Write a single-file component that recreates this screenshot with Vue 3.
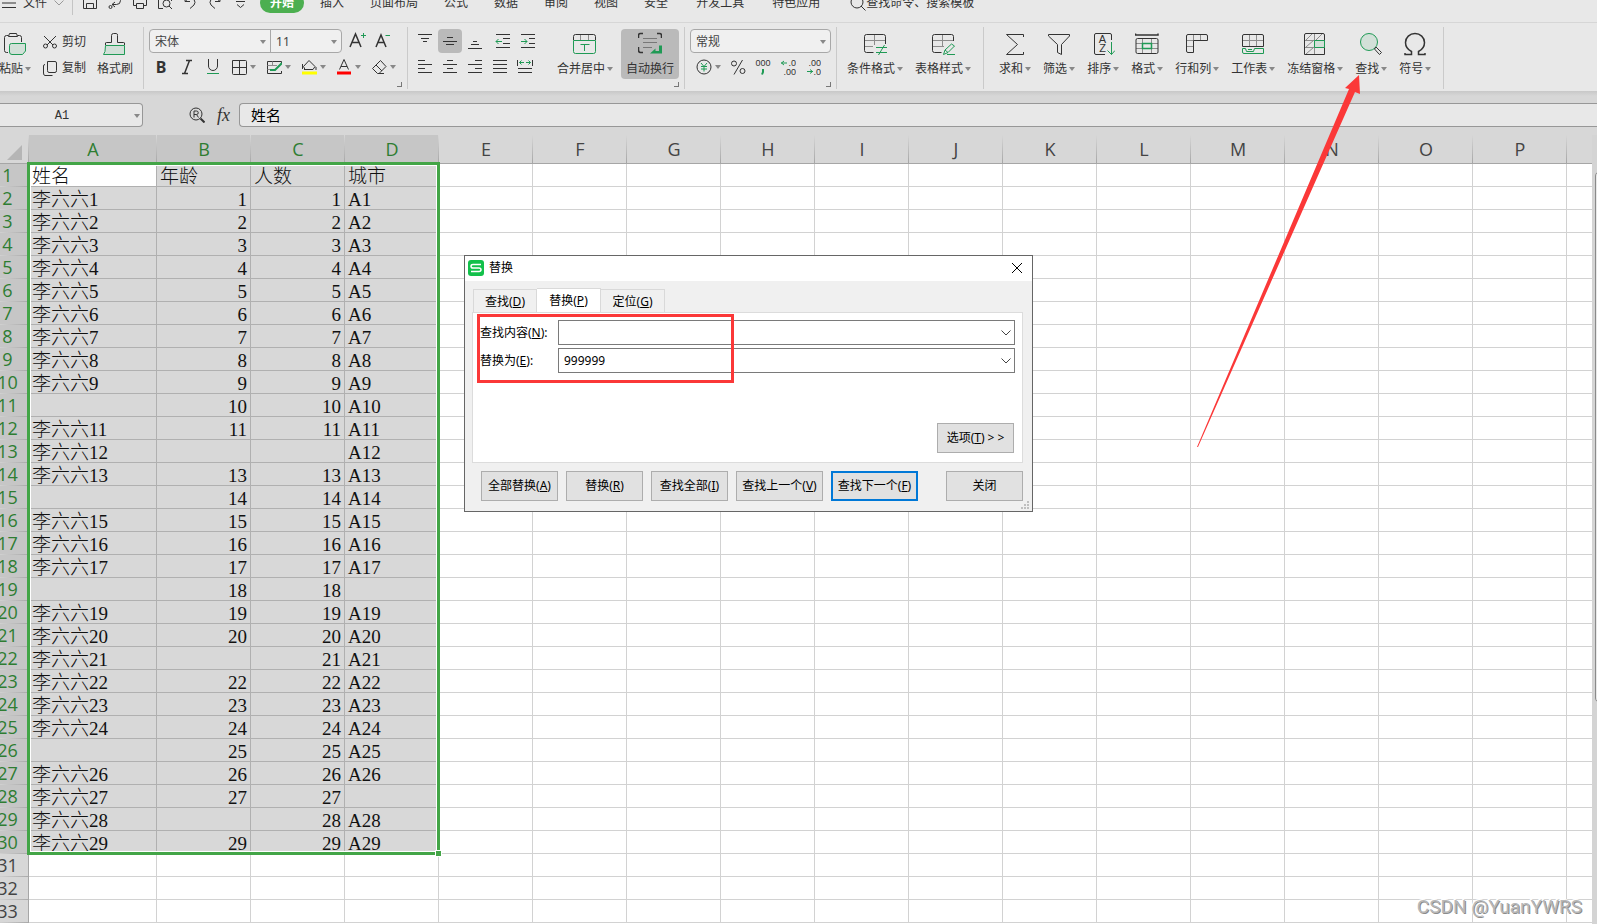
<script setup>
import { ref, computed, onMounted, onUnmounted } from 'vue'

const G = 'stroke="#1f9a55"'
const Y = 'stroke="#8c8c8c"'
const F = 'fill="#d2e0d8"'

const icons = {
  save: '<path d="M1.5 2V13.5H14.5V2M4.5 13.5V8.5H11.5V13.5"/>',
  output: '<path d="M7 1.5H9.5A4 4 0 0 1 9.5 9.5H5M8 7L5 9.5L8 12"/><circle cx="3.5" cy="12" r="1.5"/>',
  print: '<path d="M4 10.5H1.5V3.5H14.5V10.5H12"/><path d="M4.5 8.5H11.5V13.5H4.5Z"/>',
  preview: '<path d="M6 13.5H1.5V2M14.5 6V2"/><circle cx="9.5" cy="8.5" r="3.5"/><path d="M12 11L15 14"/>',
  undo: '<path d="M3 1.5V6.5H8M3.5 6L7 3A4.5 4.5 0 0 1 12 10L8 13.5"/>',
  redo: '<path d="M13 1.5V6.5H8M12.5 6L9 3A4.5 4.5 0 0 0 4 10L8 13.5"/>',
  more: '<path d="M4 6.5H13"/><path d="M5 9.5L8.5 12.5L12 9.5"/>',
  cut: '<path d="M2 2L11 11M14 2L5 11"/><circle cx="3.5" cy="12" r="2"/><circle cx="12.5" cy="12" r="2"/>',
  copy: '<path d="M5.5 1.5H13Q14.5 1.5 14.5 3V10.5Q14.5 12.5 13 12.5H7Q5.5 12.5 5.5 10.5Z"/><path d="M3 4.5Q1.5 4.5 1.5 6V13Q1.5 15.5 3 15.5H10.5"/>',
  italic: '<path stroke-width="1.5" d="M7 1.5H13M3 14.5H9M10.5 1.5L5.5 14.5"/>',
  underline: `<path d="M3.5 0V7A4.5 4.5 0 0 0 12.5 7V0"/><path ${G} d="M2 14.5H14"/>`,
  border: '<path d="M1.5 1.5H14.5Q15.5 1.5 15.5 2.5V14.5Q15.5 15.5 14.5 15.5H2.5Q1.5 15.5 1.5 14.5ZM8.5 1.5V15.5M1.5 8.5H15.5"/>',
  cellstyle: `<path d="M15.5 4V2.5H1.5V14.5H15.5V12"/><path ${Y} d="M1.5 6.5H11M1.5 10.5H6M6.5 2.5V6.5"/><path ${G} stroke-width="2" d="M4 11H9L16 4"/>`,
  fill: '<path d="M3 10.5H12L14 7.5L8 1.5L2.5 7.5L4 10.5M1.5 5V10M15 8V11"/><path stroke="#ffff00" stroke-width="3" d="M1 14H16"/>',
  fontcolor: '<path d="M3.5 10.5L8 .5L12.5 10.5M5 7.5H11"/><path stroke="#ff0000" stroke-width="3" d="M1 14H15"/>',
  eraser: '<path d="M1.5 9.5L9.5 1.5L15 7.5L8 14.5H6.5ZM5 6L11 12M7 14.5H13"/>',
  top: '<path d="M1 1.5H15M4 5.5H12M6 8.5H10"/>',
  middle: '<path d="M5 4.5H11M1 8.5H15M4 11.5H12"/>',
  bottom: '<path d="M6 8.5H10M4 11.5H12M1 15.5H15"/>',
  outdent: `<path d="M1 1.5H15M8 5.5H15M8 10.5H15M1 14.5H15"/><path ${G} d="M1 8.5H7M3.5 6L1 8.5L3.5 11"/>`,
  indent: `<path d="M1 1.5H15M9 5.5H15M9 10.5H15M1 14.5H15"/><path ${G} d="M1 8.5H7M4.5 6L7 8.5L4.5 11"/>`,
  left: '<path d="M1 1.5H8M1 5.5H15M1 9.5H8M1 13.5H15"/>',
  center: '<path d="M5 1.5H11M1 5.5H15M5 9.5H11M1 13.5H15"/>',
  right: '<path d="M8 1.5H15M1 5.5H15M8 9.5H15M1 13.5H15"/>',
  justify: '<path d="M1 1.5H15M1 5.5H15M1 9.5H15M1 13.5H15"/>',
  distribute: `<path d="M.5 1V7M15.5 1V7M1 9.5H15M1 13.5H15"/><path ${G} d="M2.5 3.5H7M4.5 1.5L2.5 3.5L4.5 5.5M9 3.5H13.5M11.5 1.5L13.5 3.5L11.5 5.5"/>`,
  yen: `<circle cx="8" cy="8" r="7"/><path ${G} d="M5 4L8 7.5L11 4M8 7.5V12.5M5 7.5H11M5 10H11"/>`,
  percent: '<circle cx="4" cy="4.5" r="2.5"/><circle cx="12.5" cy="12" r="2.5"/><path d="M12.5 1L4 15.5"/>',
  zeros: `<text x="8" y="7" text-anchor="middle">000</text><path ${G} stroke-width="2" d="M8 10V13L7 15.5"/>`,
  decmore: `<text x="16" y="7" text-anchor="end">.0</text><text x="16" y="16" text-anchor="end">.00</text><path ${G} d="M1 4H7M4 2L1.5 4L4 6"/>`,
  decless: `<text x="16" y="7" text-anchor="end">.00</text><text x="16" y="16" text-anchor="end">.0</text><path ${G} d="M2 12.5H8M5 10.5L7.5 12.5L5 14.5"/>`,
  bigger: `<path stroke-width="1.5" d="M1 15L6.5 2L12 15M3 10.5H10"/><path ${G} d="M12 3.5H17M14.5 1V6"/>`,
  smaller: `<path stroke-width="1.5" d="M2 15L7 3L12 15M4 10.5H10"/><path ${G} d="M11.5 3.5H16"/>`,
  paste: `<path d="M5.5 3.5H3.5Q1.5 3.5 1.5 5.5V18.5Q1.5 20.5 3.5 20.5H5M14.5 3.5H16.5Q18.5 3.5 18.5 5.5V10M6.5 1.5H13.5L14.5 4.5H5.5Z"/><path ${G} ${F} d="M8.5 11.5H22.5V19L19.5 22.5H9Q6.5 22.5 6.5 20V13.5Q6.5 11.5 8.5 11.5Z"/>`,
  brush: `<path ${F} stroke="none" d="M2.5 13H21.5V22.5H2.5Z"/><path d="M2.5 13V11Q2.5 10.5 3.5 10.5H8.5V3.5Q8.5 1.5 10.5 1.5H13.5Q14.5 1.5 14.5 3.5V10.5H20.5Q21.5 10.5 21.5 11V13"/><path ${G} d="M2.5 13.5H21.5V22.5H.5Q2.5 21 2.5 13.5"/>`,
  merge: `<path d="M.5 8V4.5Q.5 2.5 2.5 2.5H20.5Q22.5 2.5 22.5 4.5V8"/><path ${Y} d="M7.5 3V8M15.5 3V8"/><path ${G} d="M.5 8.5H22.5V19.5Q22.5 21.5 20.5 21.5H2.5Q.5 21.5 .5 19.5ZM7.5 12.5H16.5M11.5 12.5V19"/>`,
  wrap: `<path stroke-width="1.5" d="M.5 6V3.5Q.5 1.5 2.5 1.5H5M19 1.5H21.5Q23.5 1.5 23.5 3.5V6M.5 15V18Q.5 20.5 2.5 20.5H5"/><path stroke="#777" d="M5 6.5H19M5 10.5H19M5 15.5H14"/><path fill="#1f9a55" stroke="none" d="M21 13.5H24V21.5H12L17.5 16.5V19H21Z"/>`,
  cond: `<path ${Y} d="M1.5 8.5H22M1.5 14.5H10M11.5 3V13"/><path d="M10.5 20.5H3.5Q1.5 20.5 1.5 18.5V4.5Q1.5 2.5 3.5 2.5H20.5Q22.5 2.5 22.5 4.5V12"/><path ${G} d="M13 15.5H24M13 20.5H24M21.5 13L15.5 23"/>`,
  tstyle: `<path ${Y} d="M1.5 8.5H22M1.5 14.5H13M11.5 3V14"/><path d="M10.5 20.5H3.5Q1.5 20.5 1.5 18.5V4.5Q1.5 2.5 3.5 2.5H20.5Q22.5 2.5 22.5 4.5V9"/><path ${G} d="M12.5 22.5L14 18L20.5 12L23.5 14L17 20.5ZM16 22.5H24M14 18L17 20.5"/>`,
  sum: '<path d="M20.5 5V2.5H3.5L14.5 12.5L3.5 22.5H20.5V20"/>',
  filter: '<path d="M1.5 2.5H22.5V4L14.5 12.5V22.5L10.5 20.5V12.5L1.5 4Z"/>',
  sort: `<path d="M14 22.5H5Q3.5 22.5 3.5 21V3Q3.5 1.5 5 1.5H19Q20.5 1.5 20.5 3V8"/><text class="az" x="11.5" y="11" text-anchor="middle">A</text><text class="az" x="11.5" y="20" text-anchor="middle">Z</text><path ${G} d="M20.5 10V22.5M16.5 18.5L20.5 22.5L24 18.5"/>`,
  format: `<path ${Y} d="M1 11.5H23M1 16.5H23M7.5 7V21M16.5 7V21"/><path stroke-width="1.5" d="M.5 1.5V3H23V1.5"/><path d="M1 8Q1 6.5 2.5 6.5H21.5Q23 6.5 23 8V20Q23 21.5 21.5 21.5H2.5Q1 21.5 1 20Z"/><path ${G} fill="#e8e8e8" stroke-width="1.5" d="M7.5 11.5H16.5V16.5H7.5Z"/>`,
  rowcol: `<path ${Y} d="M8.5 3V8.5H2M15.5 3V8M2 14.5H8"/><path d="M1.5 4Q1.5 2.5 3 2.5H21Q22.5 2.5 22.5 4V8.5H8.5V20.5H3Q1.5 20.5 1.5 19Z"/>`,
  sheet: `<path ${Y} d="M2 8.5H22M8.5 3V14M15.5 3V14"/><path d="M1.5 4Q1.5 2.5 3 2.5H21Q22.5 2.5 22.5 4V14.5H1.5Z"/><path ${G} d="M1.5 16.5H4.5L5.5 19.5H12.5L13.5 16.5H22.5V21.5H3Q1.5 21.5 1.5 20ZM7 17.5H11"/>`,
  freeze: `<path ${Y} d="M2 8.5H21M2 15.5H21M11.5 2V22M3 8L9 2M3 15L11 8M3 22L11 15M13 8L19 2"/><path d="M3 1.5H20Q21.5 1.5 21.5 3V22.5H1.5V3Q1.5 1.5 3 1.5Z"/><path ${G} ${F} d="M11.5 8.5H21.5V15.5H11.5Z"/>`,
  find: `<circle cx="10" cy="10" r="8.5" ${G} ${F}/><path d="M15.5 17L20.5 22.5L22.5 20.5L17 15Z"/>`,
  omega: '<path stroke-width="1.5" d="M2 21V22.5H8.5V19.5C4.5 17.5 2.5 14 2.5 10.5A9.5 9 0 0 1 21.5 10.5C21.5 14 19.5 17.5 15.5 19.5V22.5H22V21"/>',
  inspect: '<circle cx="7" cy="7" r="6"/><path stroke-width="2" d="M11.5 11.5L15.5 15.5"/><path d="M5 10.5V4H7.5A1.5 1.5 0 0 1 7.5 7.5H5M7.5 7.5L9.5 10.5"/>'
}

const quick = [
  ['save', '保存'], ['output', '输出'], ['print', '打印'], ['preview', '打印预览'],
  ['undo', '撤销'], ['redo', '恢复'], ['more', '更多']
]
const tabs = ['插入', '页面布局', '公式', '数据', '审阅', '视图', '安全']
const extraTabs = ['开发工具', '特色应用']

const plainFont = [['italic', '倾斜'], ['underline', '下划线']]
const dropFont = [['border', '边框'], ['cellstyle', '单元格样式'], ['fill', '填充颜色'], ['fontcolor', '字体颜色'], ['eraser', '清除']]
const alignTop = [['top', '顶端对齐'], ['middle', '垂直居中'], ['bottom', '底端对齐']]
const indents = [['outdent', '减少缩进'], ['indent', '增加缩进']]
const alignLow = [['left', '左对齐'], ['center', '居中'], ['right', '右对齐'], ['justify', '两端对齐'], ['distribute', '分散对齐']]
const numFmt = [['percent', '百分比'], ['zeros', '千位分隔'], ['decmore', '增加小数位'], ['decless', '减少小数位']]
const styleBtns = [['cond', '条件格式'], ['tstyle', '表格样式']]
const editBtns = [
  ['sum', '求和'], ['filter', '筛选'], ['sort', '排序'], ['format', '格式'], ['rowcol', '行和列'],
  ['sheet', '工作表'], ['freeze', '冻结窗格'], ['find', '查找'], ['omega', '符号']
]

const noName = [10, 14, 18, 25]
const noAge = [12, 21, 28]
const noCount = [12]
const noCity = [18, 27]
const data = [['姓名', '年龄', '人数', '城市']]
for (let n = 1; n < 30; n++) {
  data.push([
    noName.includes(n) ? '' : '李六六' + n,
    noAge.includes(n) ? '' : n,
    noCount.includes(n) ? '' : n,
    noCity.includes(n) ? '' : 'A' + n
  ])
}
const cell = (r, c) => (data[r - 1] && data[r - 1][c] !== undefined ? data[r - 1][c] : '')

// The grid holds as many rows and columns as the window can show.
const winW = ref(window.innerWidth)
const winH = ref(window.innerHeight)
const measure = () => {
  winW.value = window.innerWidth
  winH.value = window.innerHeight
}
onMounted(() => window.addEventListener('resize', measure))
onUnmounted(() => window.removeEventListener('resize', measure))
const rowCount = computed(() => Math.max(30, Math.floor((winH.value - 164) / 23)))
const cols = computed(() => {
  const n = Math.min(26, Math.max(4, Math.floor((winW.value - 162) / 94) + 1))
  return 'ABCDEFGHIJKLMNOPQRSTUVWXYZ'.slice(0, n).split('')
})

const findText = ref('')
const replaceText = ref('999999')
const formula = ref('姓名')
const cellRef = ref('A1')
</script>

<template>
  <div class="app">
    <header class="menubar">
      <div class="menu-row">
        <button class="file">
          <svg class="burger" viewBox="0 0 14 12"><path d="M0 1.5H14M0 6H14M0 10.5H14" /></svg>
          文件
          <svg class="chev" viewBox="0 0 10 6"><path d="M.5 .5L5 5L9.5 .5" /></svg>
        </button>
        <div class="quick">
          <button v-for="q in quick" :key="q[0]" :aria-label="q[1]"><svg class="ic" viewBox="0 0 16 16" v-html="icons[q[0]]" /></button>
        </div>
        <button class="pill">开始</button>
        <nav class="tabs"><button v-for="t in tabs" :key="t">{{ t }}</button></nav>
        <nav class="tabs extra"><button v-for="t in extraTabs" :key="t">{{ t }}</button></nav>
        <button class="search">
          <svg class="ic" viewBox="0 0 16 16"><circle cx="7" cy="7" r="6" /><path d="M11 11L15.5 15.5" /></svg>查找命令、搜索模板
        </button>
      </div>
    </header>

    <div class="ribbon">
      <section class="group clip">
        <button class="big"><svg viewBox="0 0 24 24" v-html="icons.paste" /><span class="lbl">粘贴<i class="caret" /></span></button>
        <div class="stack">
          <button class="side"><svg class="ic" viewBox="0 0 16 16" v-html="icons.cut" />剪切</button>
          <button class="side"><svg class="ic" viewBox="0 0 16 16" v-html="icons.copy" />复制</button>
        </div>
        <button class="big"><svg viewBox="0 0 24 24" v-html="icons.brush" /><span class="lbl">格式刷</span></button>
      </section>

      <section class="group font">
        <div class="stack">
          <div class="line sizes">
            <div class="combo">
              <span class="pick name"><select aria-label="字体"><option>宋体</option></select><i class="caret" /></span>
              <span class="pick size"><select aria-label="字号"><option>11</option></select><i class="caret" /></span>
            </div>
            <button aria-label="增大字号"><svg class="ic18" viewBox="0 0 18 18" v-html="icons.bigger" /></button>
            <button aria-label="减小字号"><svg class="ic18" viewBox="0 0 18 18" v-html="icons.smaller" /></button>
          </div>
          <div class="line fmt">
            <button class="bold" aria-label="加粗">B</button>
            <button v-for="b in plainFont" :key="b[0]" :aria-label="b[1]"><svg class="ic" viewBox="0 0 16 16" v-html="icons[b[0]]" /></button>
            <button v-for="b in dropFont" :key="b[0]" class="drop" :aria-label="b[1]"><svg class="ic" viewBox="0 0 16 16" v-html="icons[b[0]]" /><i class="caret" /></button>
          </div>
        </div>
        <i class="launcher" />
      </section>

      <section class="group align">
        <div class="stack">
          <div class="line tight">
            <button v-for="b in alignTop" :key="b[0]" class="sq" :class="{ on: b[0] === 'middle' }" :aria-label="b[1]"><svg class="ic" viewBox="0 0 16 16" v-html="icons[b[0]]" /></button>
            <div class="line tight indents">
              <button v-for="b in indents" :key="b[0]" class="sq" :aria-label="b[1]"><svg class="ic" viewBox="0 0 16 16" v-html="icons[b[0]]" /></button>
            </div>
          </div>
          <div class="line tight">
            <button v-for="b in alignLow" :key="b[0]" class="sq" :aria-label="b[1]"><svg class="ic" viewBox="0 0 16 16" v-html="icons[b[0]]" /></button>
          </div>
        </div>
        <button class="big merge"><svg viewBox="0 0 24 24" v-html="icons.merge" /><span class="lbl">合并居中<i class="caret" /></span></button>
        <button class="big wrapbtn"><svg viewBox="0 0 24 24" v-html="icons.wrap" /><span class="lbl">自动换行</span></button>
        <i class="launcher" />
      </section>

      <section class="group number">
        <div class="stack">
          <div class="combo"><span class="pick kind"><select aria-label="数字格式"><option>常规</option></select><i class="caret" /></span></div>
          <div class="line nums">
            <button class="drop" aria-label="货币"><svg class="ic" viewBox="0 0 16 16" v-html="icons.yen" /><i class="caret" /></button>
            <button v-for="b in numFmt" :key="b[0]" :aria-label="b[1]"><svg class="ic" viewBox="0 0 16 16" v-html="icons[b[0]]" /></button>
          </div>
        </div>
        <i class="launcher" />
      </section>

      <section class="group styles">
        <button v-for="b in styleBtns" :key="b[0]" class="big"><svg viewBox="0 0 24 24" v-html="icons[b[0]]" /><span class="lbl">{{ b[1] }}<i class="caret" /></span></button>
      </section>

      <section class="group edit">
        <button v-for="b in editBtns" :key="b[0]" class="big"><svg viewBox="0 0 24 24" v-html="icons[b[0]]" /><span class="lbl">{{ b[1] }}<i class="caret" /></span></button>
      </section>
    </div>

    <div class="formula">
      <div class="namebox"><input v-model="cellRef" aria-label="名称框"><i class="caret" /></div>
      <div class="fxtools">
        <button aria-label="浏览公式"><svg class="ic" viewBox="0 0 16 16" v-html="icons.inspect" /></button>
        <button class="fx">fx</button>
      </div>
      <input v-model="formula" class="fxinput" aria-label="编辑栏">
    </div>

    <main class="sheet">
      <div class="viewport">
        <div class="grid">
          <table>
            <colgroup><col class="c-row"><col class="c-a"><col v-for="c in cols.slice(1)" :key="c" class="c-std"><col></colgroup>
            <thead>
              <tr><th class="corner"><span class="tri" /></th><th v-for="(c, i) in cols" :key="c" :class="{ sel: i < 4 }">{{ c }}</th><th /></tr>
            </thead>
            <tbody>
              <tr v-for="r in rowCount" :key="r">
                <th :class="{ sel: r <= 30 }">{{ r }}</th>
                <td v-for="(c, i) in cols" :key="c" :class="{ sel: r <= 30 && i < 4, active: r === 1 && i === 0, num: typeof cell(r, i) === 'number' }">{{ cell(r, i) }}</td>
                <td />
              </tr>
            </tbody>
          </table>
          <div class="range"><i class="handle" /></div>
        </div>
      </div>
      <div class="scroll"><div class="thumb" /></div>
    </main>

    <div class="dialog" role="dialog" aria-label="替换">
      <div class="title">
        <svg class="logo" viewBox="0 0 16 16"><rect width="16" height="16" rx="3" fill="#12c04a" /><path d="M13 4.5H5Q3 4.5 3 6.2Q3 8 5 8H11Q13 8 13 9.8Q13 11.5 11 11.5H3" fill="none" stroke="#fff" stroke-width="1.5" /></svg>
        <span>替换</span>
        <button class="x" aria-label="关闭窗口"><svg viewBox="0 0 12 12"><path d="M1 1L11 11M11 1L1 11" /></svg></button>
      </div>
      <div class="dbody">
        <div class="dtabs" role="tablist">
          <button role="tab">查找(<u>D</u>)</button>
          <button role="tab" class="cur">替换(<u>P</u>)</button>
          <button role="tab">定位(<u>G</u>)</button>
        </div>
        <div class="panel">
          <div class="field">
            <label for="find">查找内容(<u>N</u>):</label>
            <div class="box"><input id="find" v-model="findText"><button aria-label="查找历史"><svg class="chev" viewBox="0 0 10 6"><path d="M.5 .5L5 5L9.5 .5" /></svg></button></div>
          </div>
          <div class="field">
            <label for="repl">替换为(<u>E</u>):</label>
            <div class="box"><input id="repl" v-model="replaceText"><button aria-label="替换历史"><svg class="chev" viewBox="0 0 10 6"><path d="M.5 .5L5 5L9.5 .5" /></svg></button></div>
          </div>
          <button class="btn opt"><span>选项(<u>T</u>)</span><span>&gt;</span><span>&gt;</span></button>
        </div>
        <div class="actions">
          <button class="btn">全部替换(<u>A</u>)</button>
          <button class="btn">替换(<u>R</u>)</button>
          <button class="btn">查找全部(<u>I</u>)</button>
          <button class="btn wide">查找上一个(<u>V</u>)</button>
          <button class="btn wide primary">查找下一个(<u>F</u>)</button>
          <button class="btn close">关闭</button>
        </div>
      </div>
      <svg class="grip" viewBox="0 0 8 8"><path d="M6 0h2v2H6zM3 3h2v2H3zM6 3h2v2H6zM0 6h2v2H0zM3 6h2v2H3zM6 6h2v2H6z" /></svg>
      <div class="mark" />
    </div>

    <svg class="arrow" viewBox="0 0 164 372"><path d="M0 372L152 14L148 13L162 0L163 19L158 17L1 372Z" /></svg>
    <div class="watermark">CSDN @YuanYWRS</div>
  </div>
</template>

<style>
body {
  background: #fff;
  overflow: hidden;
}
</style>

<style scoped>
.app {
  position: relative;
  display: flex;
  flex-direction: column;
  height: 100vh;
  overflow: hidden;
  font: 12px/16px "Noto Sans", "Noto Sans CJK SC", sans-serif;
  color: #333;
}
.app * { box-sizing: border-box; }
button, input, select {
  font: inherit;
  color: inherit;
  margin: 0;
  padding: 0;
  border: 0;
  background: none;
  border-radius: 0;
  outline: none;
}
button { white-space: nowrap; }
svg { display: block; flex: none; fill: none; stroke: #333; }
.ic { width: 16px; height: 16px; }
.ic18 { width: 18px; height: 18px; }
.app :deep(svg text) {
  font: 9px "Liberation Sans", sans-serif;
  fill: #333;
  stroke: none;
}
.app :deep(svg text.az) { font-size: 11px; }
.caret {
  width: 0;
  height: 0;
  flex: none;
  border: 3px solid transparent;
  border-top: 4px solid #888;
  border-bottom: 0;
}
.chev { width: 10px; height: 6px; }

.menubar {
  flex: none;
  height: 23px;
  overflow: hidden;
  background: #e8e8e8;
  border-bottom: 1px solid #d6d6d6;
}
.menu-row {
  display: flex;
  align-items: center;
  height: 26px;
  margin-top: -10px;
  white-space: nowrap;
}
.file {
  display: flex;
  align-items: center;
  gap: 7px;
  height: 26px;
  padding-left: 2px;
  padding-right: 8px;
}
.file + .quick { border-left: 1px solid #c4c4c4; }
.burger { width: 14px; height: 12px; }
.file .chev { stroke: #999; }
.quick {
  display: flex;
  align-items: center;
  gap: 9px;
  height: 24px;
  padding: 0 12px 0 9px;
}
.pill {
  width: 44px;
  height: 20px;
  border-radius: 10px;
  background: #4caf50;
  color: #fff;
  font-weight: bold;
}
.tabs { display: flex; gap: 26px; margin-left: 16px; }
.tabs.extra { gap: 28px; margin-left: 28px; }
.search { display: flex; align-items: center; margin-left: 30px; }

.ribbon {
  flex: none;
  display: flex;
  height: 68px;
  padding: 4px 0 2px;
  background: #e8e8e8;
  overflow: hidden;
}
.group {
  position: relative;
  flex: none;
  display: flex;
  align-items: flex-start;
  gap: 12px;
  padding: 2px 5px 0;
  border-right: 1px solid #cacaca;
}
.clip { gap: 11px; margin-left: -1px; padding: 2px 10px 0 0; }
.styles { padding: 2px 12px 0 10px; }
.edit { padding: 2px 12px 0 15px; }
.big {
  display: flex;
  flex-direction: column;
  align-items: center;
  gap: 5px;
  height: 50px;
  padding-top: 3px;
}
.big svg { width: 24px; height: 24px; }
.lbl { display: flex; align-items: center; gap: 2px; }
.stack { display: flex; flex-direction: column; gap: 2px; }
.side { display: flex; align-items: center; gap: 4px; height: 24px; padding-top: 1px; }
.line { display: flex; align-items: center; height: 24px; gap: 10px; }
.line.tight { gap: 1px; }
.line.sizes { gap: 7px; }
.line.indents { margin-left: 3px; }
.line.fmt { padding-left: 4px; }
.line.nums { gap: 9px; padding-left: 6px; }
.font { padding-right: 11px; }
.drop { display: flex; align-items: center; gap: 3px; }
.bold { width: 16px; font-size: 16px; font-weight: bold; }
.combo {
  display: flex;
  height: 24px;
  border: 1px solid #a8a8a8;
  border-radius: 4px;
  background: #f0f0f0;
}
.pick { display: flex; align-items: center; padding: 1px 4px 0 5px; }
.pick select { flex: 1; min-width: 0; appearance: none; color: #444; }
.name { width: 121px; border-right: 1px solid #a8a8a8; }
.size { width: 70px; }
.kind { width: 139px; }
.sq {
  display: flex;
  align-items: center;
  justify-content: center;
  width: 24px;
  height: 24px;
  border-radius: 4px;
}
.sq.on, .wrapbtn { background: #bababa; }
.merge { margin-left: 5px; }
.wrapbtn { width: 58px; border-radius: 4px; margin-left: -4px; }
.launcher {
  position: absolute;
  right: 5px;
  bottom: 2px;
  width: 5px;
  height: 5px;
  border: 1px solid #777;
  border-top: 0;
  border-left: 0;
}

.formula {
  flex: none;
  display: flex;
  height: 44px;
  padding: 12px 0 8px;
  background: linear-gradient(#c8c8c8, #d7d7d7 5px);
}
.namebox {
  display: flex;
  align-items: center;
  flex: none;
  width: 143px;
  height: 24px;
  padding: 2px 2px 0 0;
  border: 1px solid #979797;
  border-left: 0;
  border-radius: 0 4px 4px 0;
  background: #e8e8e8;
}
.namebox input {
  flex: 1;
  min-width: 0;
  padding-right: 10px;
  text-align: center;
  font-family: "Liberation Mono", monospace;
}
.fxtools {
  display: flex;
  flex: none;
  align-items: center;
  justify-content: flex-end;
  gap: 12px;
  width: 96px;
  height: 24px;
  padding-right: 9px;
}
.fx { font: italic 18px/20px "Liberation Serif", serif; }
.fxinput {
  flex: 1;
  min-width: 0;
  height: 24px;
  padding: 0 11px 2px;
  border: 1px solid #979797;
  border-right: 0;
  border-radius: 4px 0 0 4px;
  background: #e8e8e8;
  color: #000;
  font-size: 15px;
}

.sheet { flex: 1; min-height: 0; display: flex; background: #d7d7d7; }
.viewport { flex: 1; min-width: 0; overflow: hidden; background: #fff; }
.grid { position: relative; margin-left: -13px; }
table { table-layout: fixed; width: 100%; border-spacing: 0; }
.c-row { width: 42px; }
.c-a { width: 128px; }
.c-std { width: 94px; }
th {
  height: 23px;
  padding: 0 0 2px;
  font: 18px/20px "Open Sans", "Noto Sans", sans-serif;
  color: #444;
  background: linear-gradient(90deg, #d7d7d7 20%, #aaa) bottom / 100% 1px no-repeat #d7d7d7;
  border-right: 1px solid #a6a6a6;
}
thead th {
  height: 29px;
  padding: 0;
  line-height: 28px;
  border-right: 0;
  border-bottom: 1px solid #a6a6a6;
  background: linear-gradient(#d7d7d7, #a6a6a6) right / 1px 100% no-repeat #d7d7d7;
}
th.sel { background-color: #c6c6c6; color: #2e7d32; }
thead th:last-child { background: #d7d7d7; }
.tri {
  display: block;
  width: 0;
  margin: 6px 0 0 20px;
  border-left: 15px solid transparent;
  border-bottom: 15px solid #b5b5b5;
}
td {
  height: 23px;
  padding: 3px 3px 0;
  border-right: 1px solid #d2d2d2;
  border-bottom: 1px solid #d2d2d2;
  font: 19px/19px "Liberation Serif", "Noto Sans CJK SC", serif;
  font-weight: 300;
  color: #111;
  white-space: nowrap;
}
td.sel { background: #d8d8d8; border-color: #b0b0b0; }
td.active { background: #fff; }
td.num { text-align: right; }
td:last-child { border-right: 0; }
.range {
  position: absolute;
  top: 27px;
  left: 40px;
  width: 413px;
  height: 693px;
  border: 3px solid #43a547;
  box-shadow: inset 0 0 0 1px #fff;
}
.handle {
  position: absolute;
  right: -5px;
  bottom: -5px;
  width: 7px;
  height: 7px;
  border: 1px solid #fff;
  background: #43a547;
}
.scroll { flex: none; width: 5px; padding: 36px 0 0 3px; background: #d4d4d4; overflow: hidden; }
.thumb {
  width: 12px;
  height: 532px;
  border: 1px solid #8a8a8a;
  border-radius: 5px;
  background: #e8e8e8;
}

.dialog {
  position: absolute;
  top: 255px;
  left: 464px;
  width: 569px;
  display: flex;
  flex-direction: column;
  border: 1px solid #666;
  background: #f0f0f0;
  color: #000;
}
.title {
  display: flex;
  align-items: center;
  gap: 5px;
  height: 25px;
  padding: 0 9px 1px 3px;
  background: #fff;
}
.logo { width: 16px; height: 16px; stroke: none; }
.x { margin-left: auto; }
.x svg { width: 12px; height: 12px; stroke: #000; }
.dbody { padding: 7px 9px 10px 7px; }
.dtabs { display: flex; align-items: flex-end; height: 24px; padding-left: 1px; }
.dtabs button {
  width: 64px;
  height: 23px;
  padding-top: 2px;
  border: 1px solid #d9d9d9;
  border-bottom: 0;
}
.dtabs .cur { height: 24px; padding-top: 0; background: #fff; }
.dtabs button + button { border-left: 0; }
.panel {
  display: flex;
  flex-direction: column;
  gap: 3px;
  height: 151px;
  padding: 7px 7px 9px 7px;
  border: 1px solid #dcdcdc;
  background: #fff;
}
.field { display: flex; align-items: center; }
.field label { width: 78px; flex: none; }
.box {
  display: flex;
  flex: 1;
  align-items: center;
  height: 25px;
  padding: 0 3px 0 5px;
  border: 1px solid #7a7a7a;
}
.box input { flex: 1; min-width: 0; }
.box .chev { stroke: #444; }
.btn {
  flex: none;
  width: 77px;
  height: 30px;
  border: 1px solid #adadad;
  background: #e1e1e1;
}
.opt {
  display: flex;
  align-items: center;
  justify-content: center;
  gap: 3px;
  margin: auto 1px 0 auto;
}
.actions { display: flex; gap: 8px; padding: 8px 0 0 9px; }
.btn.wide { width: 87px; }
.btn.primary { border: 2px solid #0078d7; }
.btn.close { margin-left: auto; }
.grip {
  position: absolute;
  right: 3px;
  bottom: 2px;
  width: 8px;
  height: 8px;
  fill: #bfbfbf;
  stroke: none;
}
.mark {
  position: absolute;
  top: 58px;
  left: 12px;
  width: 257px;
  height: 69px;
  border: 3px solid #fb3838;
  pointer-events: none;
}
.arrow {
  position: absolute;
  top: 75px;
  left: 1197px;
  width: 164px;
  height: 372px;
  fill: #fb3838;
  stroke: none;
  pointer-events: none;
}
.watermark {
  position: absolute;
  right: 15px;
  bottom: 5px;
  font: 19px/24px Roboto, "Liberation Sans", sans-serif;
  font-weight: 400;
  color: #b8b8b8;
  text-shadow: 1px 1px 0 #8c8c8c, -1px -1px 0 #fff;
}
</style>
